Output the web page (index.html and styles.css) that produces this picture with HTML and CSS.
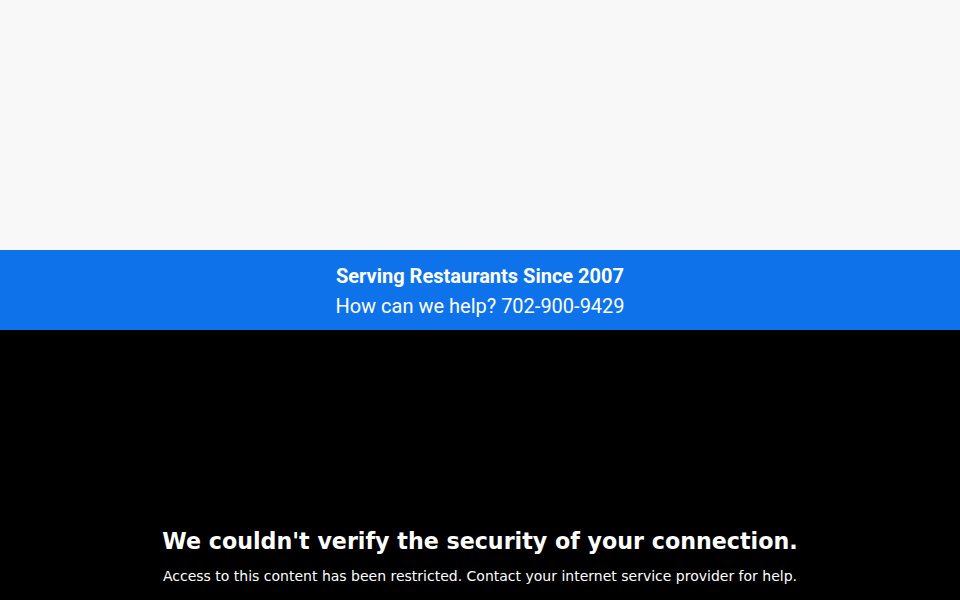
FILE: index.html
```html
<!DOCTYPE html>
<html>
<head>
<meta charset="utf-8">
<link rel="stylesheet" href="styles.css">
</head>
<body>
<header class="top"></header>
<section class="band">
  <p class="band-title">Serving Restaurants Since 2007</p>
  <p class="band-sub">How can we help? 702-900-9429</p>
</section>
<main class="blocked">
  <h1 class="blocked-title">We couldn't verify the security of your connection.</h1>
  <p class="blocked-text">Access to this content has been restricted. Contact your internet service provider for help.</p>
</main>
</body>
</html>
```
FILE: styles.css
```css
html, body { margin: 0; padding: 0; }
body { background: #000; height: 600px; overflow: hidden; }
.top { height: 250px; background: #f8f8f8; }
.band {
  height: 80px;
  box-sizing: border-box;
  padding: 11px 0 9px;
  background: #0e73ea;
  color: #fff;
  text-align: center;
  font-family: Roboto, "Liberation Sans", sans-serif;
  font-size: 20px;
  line-height: 30px;
}
.band p { margin: 0; }
.band-title { font-weight: 700; }
.band-sub { font-weight: 400; }
.blocked {
  padding-top: 196px;
  text-align: center;
  color: #fff;
  font-family: "DejaVu Sans", sans-serif;
}
.blocked-title { margin: 0; font-size: 22.2px; line-height: 30px; font-weight: 700; }
.blocked-text { margin: 10px 0 0; font-size: 14px; line-height: 20px; }
```
